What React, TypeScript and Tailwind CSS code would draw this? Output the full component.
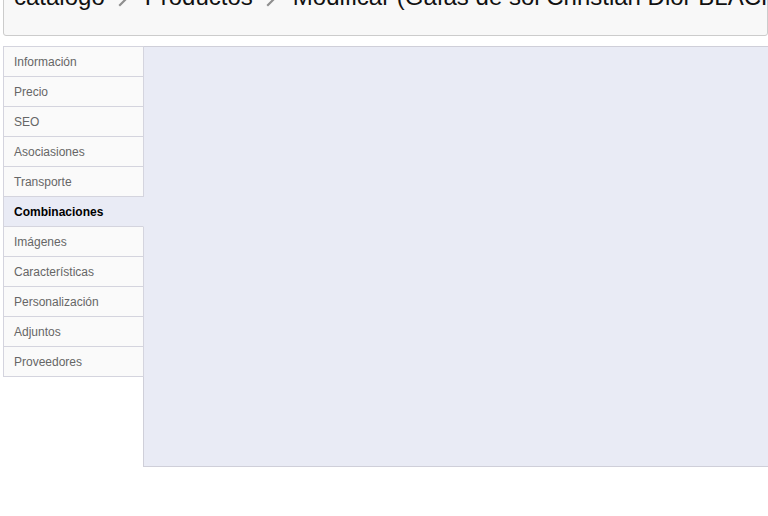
import React from "react";

const items = [
  "Información",
  "Precio",
  "SEO",
  "Asociasiones",
  "Transporte",
  "Combinaciones",
  "Imágenes",
  "Características",
  "Personalización",
  "Adjuntos",
  "Proveedores",
];

function Chevron() {
  return (
    <svg width="16" height="16" viewBox="0 0 16 16" className="shrink-0 mt-[3px]">
      <path d="M3 2 L9 8 L3 14" fill="none" stroke="#8f8f8f" strokeWidth="2.2" strokeLinecap="square" />
    </svg>
  );
}

export default function App() {
  return (
    <div className="h-[516px] w-[768px] overflow-hidden bg-white font-['Liberation_Sans',Arial,sans-serif]">
      <div className="ml-[3px] -mt-[18px] h-[54px] rounded-[3px] border border-[#cccccc] bg-[#f8f8f8] pl-[10px] overflow-hidden">
        <div className="flex items-center gap-[12px] whitespace-nowrap text-[24px] leading-[28px] text-[#111]">
          <span>catálogo</span>
          <Chevron />
          <span>Productos</span>
          <Chevron />
          <span>Modificar (Gafas de sol Christian Dior BLACKTIE 143S)</span>
        </div>
      </div>
      <div className="mt-[10px] flex">
        <ul className="relative z-10 ml-[3px] w-[141px] shrink-0 border-t border-[#d4d4de]">
          {items.map((it) => {
            const active = it === "Combinaciones";
            return (
              <li
                key={it}
                className={
                  active
                    ? "flex h-[30px] items-center border-b border-l border-r border-b-[#d4d4de] border-l-[#d4d4de] border-r-[#e9ebf5] bg-[#e9ebf5] pl-[10px] text-[12px] font-bold text-[#000]"
                    : "flex h-[30px] items-center border-b border-l border-r border-[#d4d4de] bg-[#fafafa] pl-[10px] text-[12px] text-[#666]"
                }
              >
                {it}
              </li>
            );
          })}
        </ul>
        <div className="-ml-px h-[421px] flex-1 border border-r-0 border-[#cfcfd9] bg-[#e9ebf5]" />
      </div>
    </div>
  );
}
